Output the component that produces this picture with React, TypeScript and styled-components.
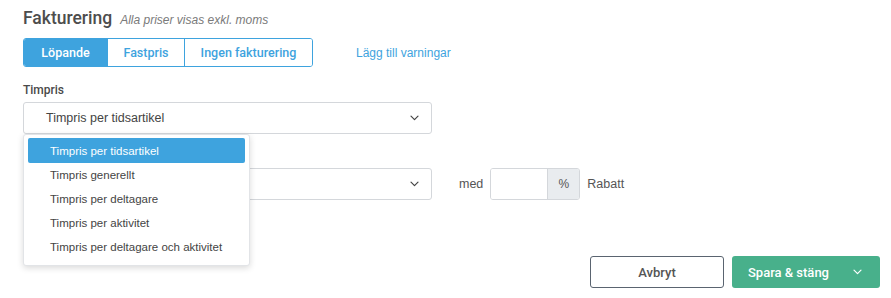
import React from 'react'
import styled, { createGlobalStyle } from 'styled-components'

const GlobalStyle = createGlobalStyle`
  html, body {
    margin: 0;
    padding: 0;
    background: #fff;
  }
  body {
    font-family: 'Liberation Sans', Arial, sans-serif;
    color: #444;
    font-size: 12.5px;
  }
`

const tabs = [
  { label: 'Löpande', width: 83 },
  { label: 'Fastpris', width: 76 },
  { label: 'Ingen fakturering', width: 127 },
]

const options = [
  'Timpris per tidsartikel',
  'Timpris generellt',
  'Timpris per deltagare',
  'Timpris per aktivitet',
  'Timpris per deltagare och aktivitet',
]

const Chevron = ({ color = '#444' }: { color?: string }) => (
  <svg width="9" height="6" viewBox="0 0 9 6" fill="none">
    <path d="M1 1.2l3.5 3.5 3.5-3.5" stroke={color} strokeWidth="1.2" strokeLinecap="round" strokeLinejoin="round" />
  </svg>
)

const App = () => {
  return (
    <>
      <GlobalStyle />
      <Page>
        <Header>
          <Title>Fakturering</Title>
          <Subtitle>Alla priser visas exkl. moms</Subtitle>
        </Header>

        <Toolbar>
          <TabGroup>
            {tabs.map((t, i) => (
              <Tab key={t.label} active={i === 0} width={t.width}>
                {t.label}
              </Tab>
            ))}
          </TabGroup>
          <Link>Lägg till varningar</Link>
        </Toolbar>

        <Field>
          <Label>Timpris</Label>
          <Select>
            <span>Timpris per tidsartikel</span>
            <Chevron />
          </Select>
          <Menu>
            {options.map((o, i) => (
              <MenuItem key={o} selected={i === 0}>
                {o}
              </MenuItem>
            ))}
          </Menu>
        </Field>

        <Row>
          <Select>
            <span />
            <Chevron />
          </Select>
          <RowText>med</RowText>
          <InputGroup>
            <Input />
            <Addon>%</Addon>
          </InputGroup>
          <RowText>Rabatt</RowText>
        </Row>

        <Footer>
          <GhostButton>Avbryt</GhostButton>
          <PrimaryButton>
            <span>Spara &amp; stäng</span>
            <Chevron color="#fff" />
          </PrimaryButton>
        </Footer>
      </Page>
    </>
  )
}

export default App

const Page = styled.div`
  width: 891px;
  height: 298px;
  box-sizing: border-box;
  padding: 8px 11px 0 23px;
  display: flex;
  flex-direction: column;
`

const Header = styled.div`
  display: flex;
  align-items: baseline;
  gap: 8px;
  height: 26px;
`

const Title = styled.h2`
  margin: 0;
  font-family: Roboto, 'Liberation Sans', sans-serif;
  font-size: 17.5px;
  font-weight: 500;
  color: #4d4d4d;
`

const Subtitle = styled.span`
  font-size: 12px;
  font-style: italic;
  color: #7a7a7a;
`

const Toolbar = styled.div`
  display: flex;
  align-items: center;
  margin-top: 4px;
`

const TabGroup = styled.div`
  display: flex;
  border: 1px solid #3ea3de;
  border-radius: 3px;
  overflow: hidden;
  height: 27px;
`

const Tab = styled.div<{ active?: boolean; width: number }>`
  width: ${(p) => p.width}px;
  display: flex;
  align-items: center;
  justify-content: center;
  font-family: Roboto, 'Liberation Sans', sans-serif;
  font-size: 12.5px;
  font-weight: 500;
  color: ${(p) => (p.active ? '#fff' : '#3ea3de')};
  background: ${(p) => (p.active ? '#3ea3de' : '#fff')};
  & + & {
    border-left: 1px solid #3ea3de;
  }
`

const Link = styled.span`
  margin-left: 43px;
  font-size: 12px;
  color: #3ea3de;
`

const Field = styled.div`
  position: relative;
  margin-top: 16px;
`

const Label = styled.div`
  font-family: Roboto, 'Liberation Sans', sans-serif;
  font-size: 12px;
  font-weight: 500;
  color: #4a4a4a;
  margin-bottom: 5px;
`

const Select = styled.div`
  width: 409px;
  height: 32px;
  box-sizing: border-box;
  border: 1px solid #d4d7db;
  border-radius: 3px;
  display: flex;
  align-items: center;
  justify-content: space-between;
  padding: 0 12px 0 22px;
  font-size: 12.5px;
  color: #444;
  background: #fff;
`

const Menu = styled.div`
  position: absolute;
  left: 0;
  top: 51px;
  z-index: 2;
  width: 227px;
  box-sizing: border-box;
  padding: 3px 4px 6px 4px;
  background: #fff;
  border: 1px solid #e2e4e7;
  border-radius: 3px;
  box-shadow: 0 2px 6px rgba(0, 0, 0, 0.15);
`

const MenuItem = styled.div<{ selected?: boolean }>`
  height: 24px;
  display: flex;
  align-items: center;
  padding-left: 22px;
  border-radius: 2px;
  font-size: 11.5px;
  color: ${(p) => (p.selected ? '#fff' : '#444')};
  background: ${(p) => (p.selected ? '#3ea3de' : 'transparent')};
  &:first-child {
    height: 25px;
  }
`

const Row = styled.div`
  display: flex;
  align-items: center;
  margin-top: 34px;
`

const RowText = styled.span`
  font-size: 12.5px;
  color: #555;
  margin: 0 7px 0 27px;
  &:last-child {
    margin-left: 7px;
  }
`

const InputGroup = styled.div`
  display: flex;
  width: 90px;
  height: 32px;
  box-sizing: border-box;
  border: 1px solid #d4d7db;
  border-radius: 3px;
  overflow: hidden;
`

const Input = styled.div`
  flex: 1;
  background: #fff;
`

const Addon = styled.div`
  width: 31px;
  border-left: 1px solid #d4d7db;
  background: #e9ecef;
  display: flex;
  align-items: center;
  justify-content: center;
  font-size: 12px;
  color: #555;
`

const Footer = styled.div`
  display: flex;
  justify-content: flex-end;
  gap: 8px;
  margin-top: 56px;
`

const GhostButton = styled.button`
  width: 134px;
  height: 32px;
  border: 1px solid #5a6470;
  border-radius: 3px;
  background: #fff;
  font-family: Roboto, 'Liberation Sans', sans-serif;
  font-size: 13px;
  font-weight: 500;
  color: #555;
`

const PrimaryButton = styled.button`
  width: 148px;
  height: 32px;
  border: none;
  border-radius: 3px;
  background: #48b08b;
  font-family: Roboto, 'Liberation Sans', sans-serif;
  font-size: 13px;
  font-weight: 500;
  color: #fff;
  display: flex;
  align-items: center;
  justify-content: space-between;
  padding: 0 18px 0 16px;
`
